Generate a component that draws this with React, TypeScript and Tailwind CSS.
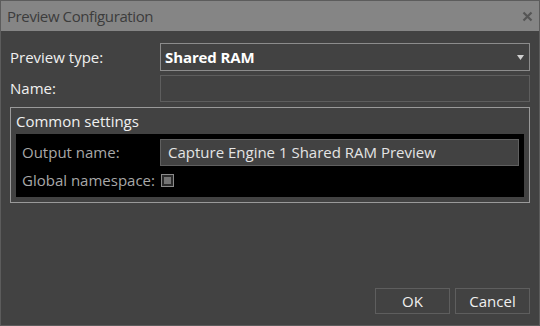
import React from "react";

const font = { fontFamily: '"Open Sans", "Noto Sans", sans-serif' };

const App: React.FC = () => {
  return (
    <div
      className="w-[540px] h-[326px] flex flex-col bg-[#424242] border border-[#5c5c5c] text-[15px] leading-none"
      style={font}
    >
      <div className="h-[30px] shrink-0 bg-[#858585] flex items-center justify-between pl-[6px] pr-[6px]">
        <span className="text-[#3c3c3c] text-[15px] tracking-[-0.4px]">Preview Configuration</span>
        <svg width="11" height="11" viewBox="0 0 11 11" className="mt-[1px]">
          <path d="M1.5 1.5 L9.5 9.5 M9.5 1.5 L1.5 9.5" stroke="#555" strokeWidth="2.2" />
        </svg>
      </div>

      <div className="flex-1 flex flex-col px-[9px] pt-[12px] pb-[11px]">
        <div className="flex items-center">
          <div className="w-[150px] text-[#f0f0f0]">Preview type:</div>
          <div className="flex-1 h-[28px] border border-[#8c8c8c] flex items-center justify-between pl-[4px] pr-[5px]">
            <span className="text-white font-bold tracking-[-0.1px]">Shared RAM</span>
            <svg width="7" height="5" viewBox="0 0 7 5">
              <path d="M0 0 H7 L3.5 5 Z" fill="#d0d0d0" />
            </svg>
          </div>
        </div>

        <div className="flex items-center mt-[4px]">
          <div className="w-[150px] text-[#f0f0f0]">Name:</div>
          <div className="flex-1 h-[27px] border border-[#5e5e5e]" />
        </div>

        <div className="mt-[5px] border border-[#9a9a9a] flex flex-col px-[5px] pb-[5px]">
          <div className="h-[26px] flex items-center text-[#f0f0f0] pt-[1px]">Common settings</div>
          <div className="bg-black flex flex-col pl-[6px] pr-[5px] pt-[5px] pb-[3px]">
            <div className="flex items-center">
              <div className="w-[138px] text-[#a8a8a8]">Output name:</div>
              <div className="flex-1 h-[27px] bg-[#424242] border border-[#606060] flex items-center pl-[7px] text-[#e4e4e4]">
                Capture Engine 1 Shared RAM Preview
              </div>
            </div>
            <div className="flex items-center h-[28px] pt-[1px]">
              <div className="w-[139px] text-[#a8a8a8]">Global namespace:</div>
              <div className="w-[13px] h-[13px] border border-[#8a8a8a] bg-[#2a2a2a] p-[2px]">
                <div className="w-full h-full bg-[#737373]" />
              </div>
            </div>
          </div>
        </div>

        <div className="flex-1" />

        <div className="flex justify-end gap-[5px]">
          <button className="w-[75px] h-[26px] border border-[#5e5e5e] text-[#f0f0f0] text-[15px]">OK</button>
          <button className="w-[75px] h-[26px] border border-[#5e5e5e] text-[#f0f0f0] text-[15px]">Cancel</button>
        </div>
      </div>
    </div>
  );
};

export default App;
